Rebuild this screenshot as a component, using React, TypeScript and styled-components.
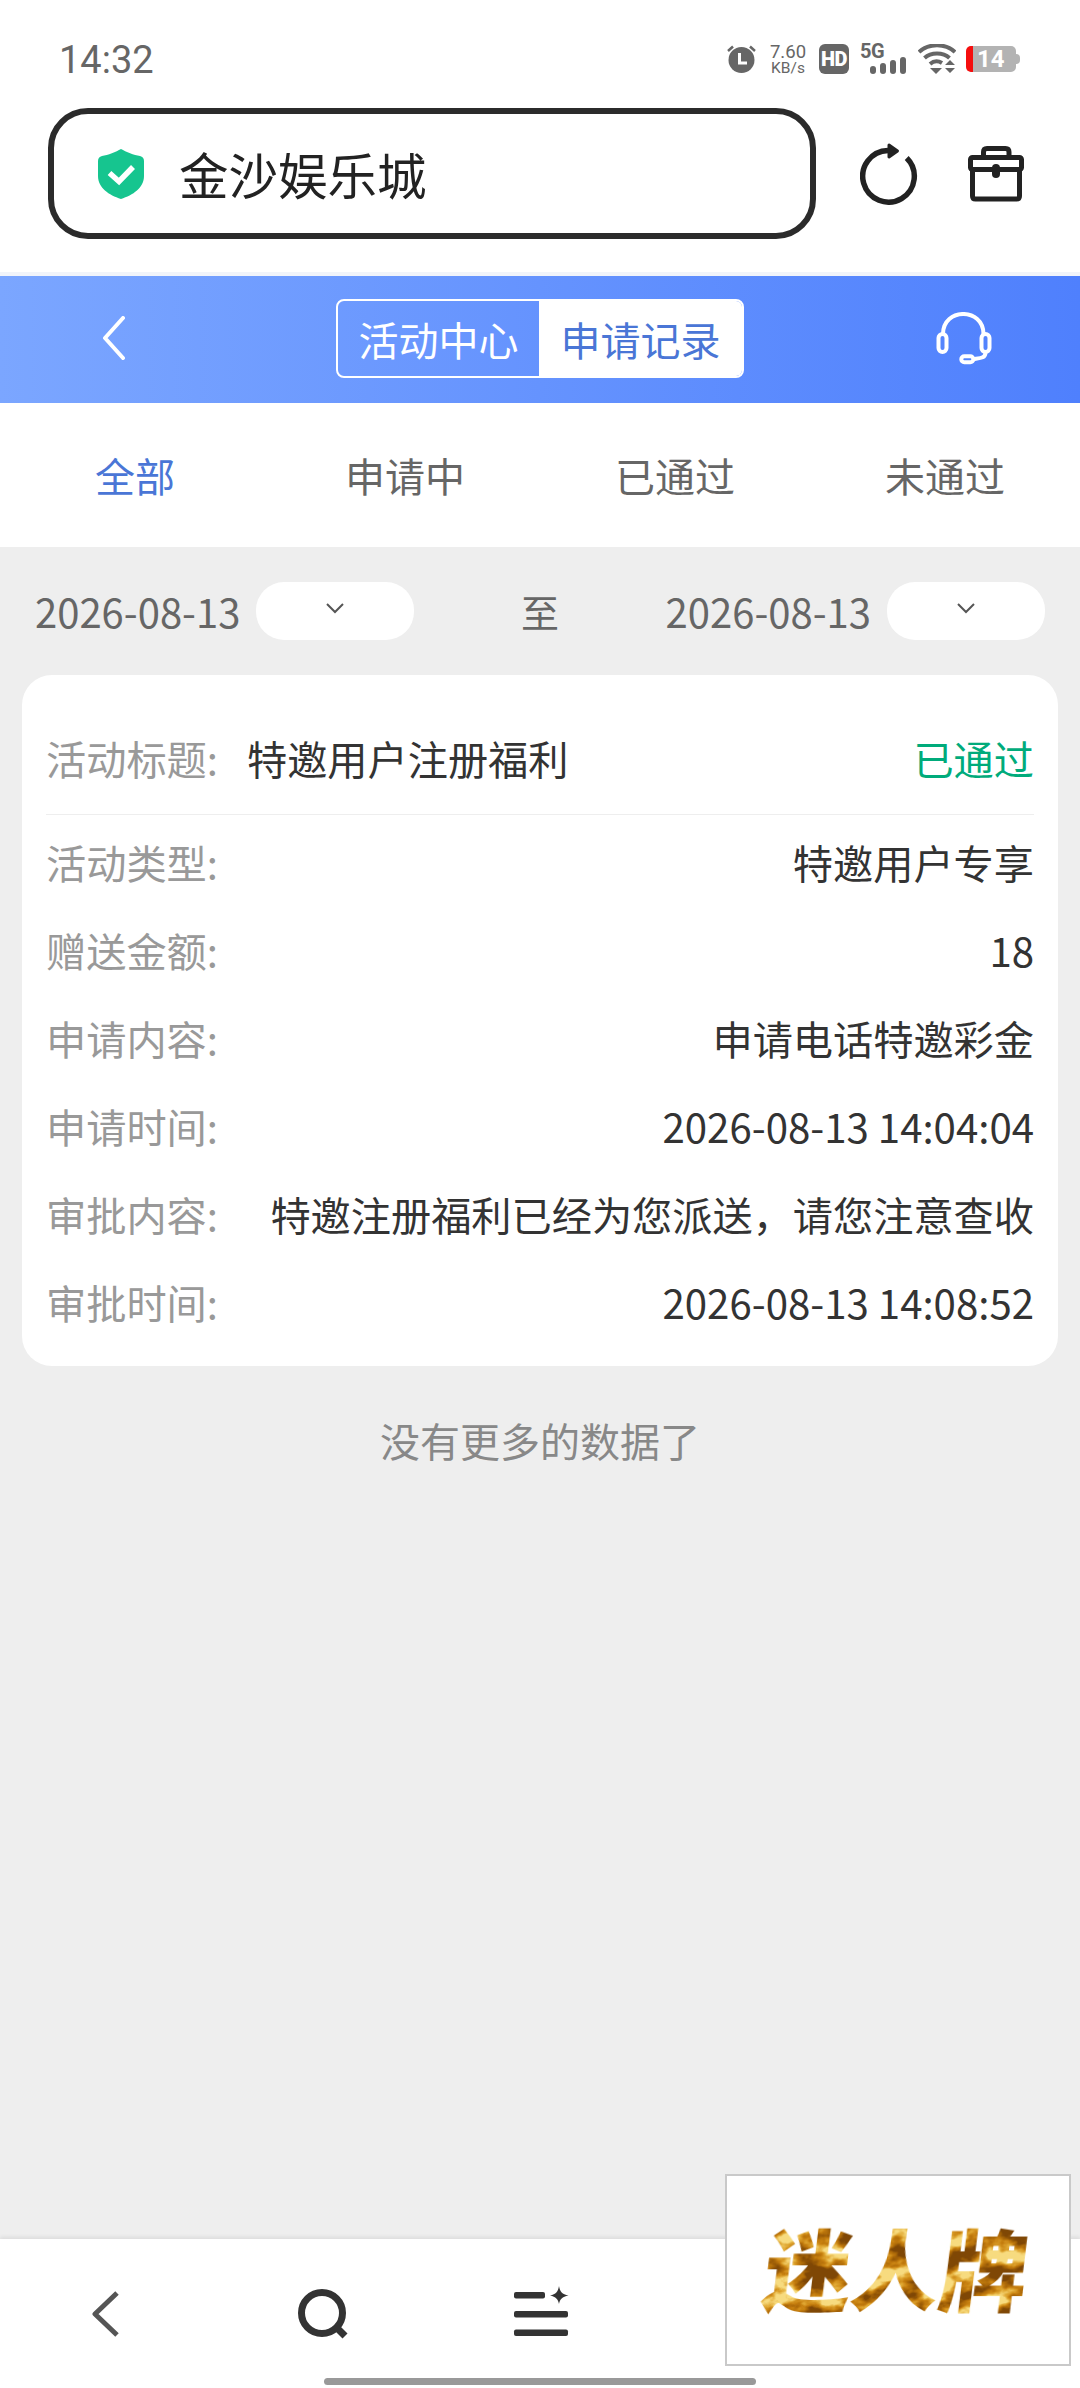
import React from "react";
import styled, { createGlobalStyle } from "styled-components";

const Global = createGlobalStyle`
  html, body { margin: 0; padding: 0; background: #fff; }
  body { font-family: "Noto Sans CJK SC", "Noto Sans", sans-serif; }
  * { box-sizing: border-box; }
`;

const Page = styled.div`
  position: relative;
  width: 1080px;
  height: 2388px;
  display: flex;
  flex-direction: column;
  overflow: hidden;
  background: #eeeeee;
`;

const TopArea = styled.div`
  background: #fff;
  height: 272px;
`;

const StatusBar = styled.div`
  height: 108px;
  padding: 38px 60px 0 59px;
  display: flex;
  justify-content: space-between;
  align-items: flex-start;
`;

const Time = styled.span`
  font-family: Roboto, sans-serif;
  font-size: 38px;
  line-height: 44px;
  color: #666;
`;

const StatusIcons = styled.div`
  display: flex;
  align-items: flex-start;
  margin-top: 6px;
`;

const Speed = styled.div`
  width: 38px;
  margin: 0 12px 0 13px;
  display: flex;
  flex-direction: column;
  align-items: center;
  font-family: Roboto, sans-serif;
  color: #666;
`;

const SpeedValue = styled.span`
  font-size: 18.5px;
  line-height: 17px;
  white-space: nowrap;
`;

const SpeedUnit = styled.span`
  font-size: 15.5px;
  line-height: 15px;
  white-space: nowrap;
`;

const HdBadge = styled.div`
  width: 30px;
  height: 30px;
  margin-right: 11px;
  border-radius: 6px;
  background: #666;
  color: #fff;
  font-family: Roboto, sans-serif;
  font-weight: 900;
  font-size: 20px;
  line-height: 30px;
  letter-spacing: -0.5px;
  text-align: center;
`;

const SignalGroup = styled.div`
  position: relative;
  width: 46px;
  height: 30px;
  margin-right: 12px;
`;

const FiveG = styled.span`
  position: absolute;
  left: 0;
  top: 0;
  font-family: Roboto, sans-serif;
  font-weight: 700;
  font-size: 20px;
  line-height: 15px;
  letter-spacing: -0.5px;
  color: #666;
`;

const Battery = styled.div`
  position: relative;
  width: 50px;
  height: 26px;
  margin: 2px 4px 0 10px;
  border-radius: 5px;
  border-left: 7px solid #f50e0e;
  background: #b3b3b3;
  color: #fff;
  font-family: Roboto, sans-serif;
  font-weight: 700;
  font-size: 24px;
  line-height: 26px;
  padding-left: 4px;

  &::after {
    content: "";
    position: absolute;
    right: -4px;
    top: 8px;
    width: 4px;
    height: 10px;
    border-radius: 0 4px 4px 0;
    background: #b3b3b3;
  }
`;

const AddressRow = styled.div`
  display: flex;
  align-items: center;
  padding-left: 48px;
`;

const AddressBox = styled.div`
  width: 768px;
  height: 131px;
  border: 6px solid #2b2b2b;
  border-radius: 40px;
  display: flex;
  align-items: center;
  padding-left: 44px;
`;

const AddressText = styled.span`
  margin-left: 35px;
  font-size: 49.5px;
  color: #222;
  line-height: 60px;
`;

const AddressActions = styled.div`
  display: flex;
  align-items: center;
  margin-left: 44px;
  gap: 50px;
`;

const Header = styled.div`
  height: 131px;
  border-top: 4px solid #f1f4fa;
  background: linear-gradient(90deg, #7ba6ff 0%, #4f80fd 100%);
  background-clip: padding-box;
  display: flex;
  align-items: center;
  justify-content: space-between;
  padding: 0 87px 0 102px;
`;

const HeaderBackWrap = styled.div`
  display: flex;
  margin-top: -4px;
`;

const Segment = styled.div`
  width: 408px;
  height: 79px;
  margin: -2px 0 0 19px;
  border: 2px solid #fff;
  border-radius: 8px;
  display: flex;
  overflow: hidden;
`;

const SegmentItem = styled.div<{ $active?: boolean }>`
  flex: ${(p) => (p.$active ? "0 0 203px" : "1")};
  display: flex;
  align-items: center;
  justify-content: center;
  font-size: 40px;
  background: ${(p) => (p.$active ? "#fff" : "transparent")};
  color: ${(p) => (p.$active ? "#4a76d6" : "#fff")};
`;

const Tabs = styled.div`
  height: 144px;
  background: #fff;
  display: grid;
  grid-template-columns: repeat(4, 1fr);
`;

const Tab = styled.div<{ $active?: boolean }>`
  display: flex;
  align-items: center;
  justify-content: center;
  font-size: 40px;
  padding-bottom: 1px;
  color: ${(p) => (p.$active ? "#4a76d6" : "#666")};
`;

const Main = styled.div`
  flex: 1;
  padding: 0 22px;
`;

const DateRow = styled.div`
  display: flex;
  align-items: center;
  height: 128px;
  padding: 0 13px;
  justify-content: space-between;
`;

const DateGroup = styled.div`
  display: flex;
  align-items: center;
  gap: 16px;
`;

const DateText = styled.span`
  font-size: 40px;
  color: #666;
  line-height: 58px;
`;

const Pill = styled.div`
  width: 158px;
  height: 58px;
  border-radius: 28px;
  background: #fff;
  display: flex;
  align-items: center;
  justify-content: center;
  padding-bottom: 6px;
`;

const Sep = styled.span`
  font-size: 38px;
  color: #666;
  margin-bottom: 2px;
`;

const Card = styled.div`
  height: 691px;
  background: #fff;
  border-radius: 30px;
  padding: 0 24px;
`;

const TitleRow = styled.div`
  height: 140px;
  border-bottom: 1px solid #eeeeee;
  display: flex;
  align-items: center;
  padding-top: 25px;
`;

const Row = styled.div`
  height: 88px;
  display: flex;
  align-items: center;
  justify-content: space-between;
  font-size: 40.2px;
`;

const Rows = styled.div`
  padding-top: 2px;
`;

const Label = styled.span`
  font-size: 40.2px;
  color: #999;
  white-space: nowrap;
`;

const TitleValue = styled.span`
  flex: 1;
  margin-left: 29px;
  font-size: 40.2px;
  color: #333;
`;

const Status = styled.span`
  font-size: 40.2px;
  color: #00ab7b;
`;

const Value = styled.span`
  color: #333;
  white-space: nowrap;
`;

const Footer = styled.div`
  height: 148px;
  display: flex;
  align-items: center;
  justify-content: center;
  font-size: 40px;
  color: #888;
`;

const BottomNav = styled.div`
  position: relative;
  height: 149px;
  background: #fff;
  box-shadow: 0 -2px 4px rgba(0, 0, 0, 0.08);
  display: flex;
  align-items: center;
  padding: 0 0 0 92px;
`;

const NavSearch = styled.div`
  margin-left: 179px;
  display: flex;
`;

const NavMenu = styled.div`
  margin: -6px 0 0 163px;
  display: flex;
`;

const HomeBar = styled.div`
  position: absolute;
  left: 324px;
  bottom: 3px;
  width: 432px;
  height: 7px;
  border-radius: 4px;
  background: #999;
`;

const LogoBox = styled.div`
  position: absolute;
  left: 725px;
  top: 2174px;
  width: 346px;
  height: 192px;
  background: #fff;
  border: 2px solid #c9c9c9;
  display: flex;
  align-items: center;
  justify-content: center;
`;

const Shield = () => (
  <svg width="46" height="50" viewBox="0 0 46 50">
    <path
      d="M23 0 C28 3 36 6 42 7 Q46 8 46 12 V27 C46 39 35 46 23 50 C11 46 0 39 0 27 V12 Q0 8 4 7 C10 6 18 3 23 0 Z"
      fill="#16c58f"
    />
    <path d="M11.5 24 L21 32.5 L35 18" fill="none" stroke="#fff" strokeWidth="5.5" />
  </svg>
);

const Reload = () => (
  <svg width="58" height="62" viewBox="0 0 58 62" fill="none">
    <path d="M46.7 15 A 25.8 25.8 0 1 1 28 7.5" stroke="#222" strokeWidth="5.5" />
    <path d="M29 2 L37.5 8 L29 14 Z" fill="#222" stroke="#222" strokeWidth="3" strokeLinejoin="round" />
  </svg>
);

const Bag = () => (
  <svg width="56" height="56" viewBox="0 0 56 56" fill="none" stroke="#222" strokeWidth="5" strokeLinejoin="round">
    <path d="M15.5 11 V6 C15.5 3.5 17 2.5 19 2.5 H37.5 C39.5 2.5 41 3.5 41 6 V11" />
    <rect x="2.5" y="11.5" width="51" height="12" rx="2" />
    <path d="M4.5 23 V50 C4.5 52 5.5 53 7.5 53 H48.5 C50.5 53 51.5 52 51.5 50 V23" />
    <rect x="24" y="18" width="8" height="14" rx="4" fill="#222" stroke="none" />
  </svg>
);

const Alarm = () => (
  <svg width="29" height="29" viewBox="0 0 29 29">
    <circle cx="14.5" cy="16" r="13" fill="#666" />
    <path d="M12.5 9 V19 H20" fill="none" stroke="#fff" strokeWidth="3" />
    <path d="M1 7 L6 2.5 M28 7 L23 2.5" stroke="#666" strokeWidth="2.5" />
  </svg>
);

const SignalBars = () => (
  <svg width="46" height="30" viewBox="0 0 46 30">
    <rect x="10" y="22" width="6" height="8" rx="3" fill="#666" />
    <rect x="20" y="19" width="6" height="11" rx="3" fill="#666" />
    <rect x="30" y="16" width="6" height="14" rx="3" fill="#666" />
    <rect x="40" y="13" width="6" height="17" rx="3" fill="#666" />
  </svg>
);

const Wifi = () => (
  <svg width="38" height="30" viewBox="0 0 38 30" fill="none">
    <path d="M1 8 C11 -1 27 -1 37 8" stroke="#666" strokeWidth="4" />
    <path d="M6.5 14 C13 8 25 8 31.5 14" stroke="#666" strokeWidth="4" />
    <path d="M12 20 C16 16.5 20 16.5 24 19" stroke="#666" strokeWidth="4" />
    <path d="M12 24 H24 L18 30 Z" fill="#666" />
    <path d="M32 16 L37 21 H27 Z M27 24 H37 L32 29 Z" fill="#666" />
  </svg>
);

const HeaderBack = () => (
  <svg width="24" height="44" viewBox="0 0 24 44" fill="none" stroke="#fff" strokeWidth="4" strokeLinecap="round" strokeLinejoin="round">
    <path d="M21 2 L3 22 L21 42" />
  </svg>
);

const Headset = () => (
  <svg width="58" height="55" viewBox="0 0 58 55" fill="none" stroke="#fff" strokeWidth="4">
    <path d="M8 22 C8 -4.7 48.5 -4.7 48.5 22" />
    <rect x="3.5" y="22" width="8" height="18" rx="4" />
    <rect x="46.5" y="22" width="8" height="18" rx="4" />
    <path d="M50.5 41 C50 46 46 46 39 47" />
    <rect x="26.3" y="44.3" width="12" height="6" rx="3" />
  </svg>
);

const SmallChevron = () => (
  <svg width="20" height="12" viewBox="0 0 20 12" fill="none" stroke="#555" strokeWidth="2">
    <path d="M2 2 L10 10 L18 2" />
  </svg>
);

const NavBack = () => (
  <svg width="27" height="46" viewBox="0 0 27 46" fill="none" stroke="#555" strokeWidth="5" strokeLinejoin="round">
    <path d="M25 2 L3 23 L25 44" />
  </svg>
);

const NavSearchIcon = () => (
  <svg width="52" height="50" viewBox="0 0 52 50" fill="none" stroke="#333" strokeWidth="7">
    <circle cx="24" cy="24" r="20.5" />
    <path d="M38 38 L47 47" />
  </svg>
);

const NavMenuIcon = () => (
  <svg width="56" height="50" viewBox="0 0 56 50" fill="#333">
    <rect x="1" y="6" width="31" height="6.5" rx="2" />
    <rect x="1" y="25" width="54" height="6.5" rx="2" />
    <rect x="1" y="43.5" width="54" height="6.5" rx="2" />
    <path d="M46 0 C47 6 49 8 55.5 9.5 C49 11 47 13 46 18 C45 13 43 11 37 9.5 C43 8 45 6 46 0 Z" />
  </svg>
);

const GoldLogo = () => (
  <svg width="342" height="188" viewBox="0 0 342 188">
    <defs>
      <filter id="goldMarble" x="-5%" y="-5%" width="110%" height="110%" colorInterpolationFilters="sRGB">
        <feTurbulence type="fractalNoise" baseFrequency="0.03 0.045" numOctaves="4" seed="11" result="noise" />
        <feColorMatrix
          in="noise"
          type="matrix"
          values="3.2 0 0 0 -1.1  3.2 0 0 0 -1.1  3.2 0 0 0 -1.1  0 0 0 0 1"
        />
        <feComponentTransfer result="gold">
          <feFuncR type="table" tableValues="0.5 0.66 0.78 0.88 0.97" />
          <feFuncG type="table" tableValues="0.28 0.4 0.5 0.66 0.86" />
          <feFuncB type="table" tableValues="0.02 0.03 0.06 0.2 0.5" />
        </feComponentTransfer>
        <feComposite in="gold" in2="SourceAlpha" operator="in" />
      </filter>
    </defs>
    <text
      x="33"
      y="128"
      fontFamily='"Noto Sans CJK SC", sans-serif'
      fontWeight="900"
      fontSize="88"
      transform="skewX(-7) translate(16 0)"
      filter="url(#goldMarble)"
    >
      迷人牌
    </text>
  </svg>
);

const details: [string, string][] = [
  ["活动类型:", "特邀用户专享"],
  ["赠送金额:", "18"],
  ["申请内容:", "申请电话特邀彩金"],
  ["申请时间:", "2026-08-13 14:04:04"],
  ["审批内容:", "特邀注册福利已经为您派送\uFF0C请您注意查收"],
  ["审批时间:", "2026-08-13 14:08:52"],
];

export default function App() {
  return (
    <Page>
      <Global />
      <TopArea>
        <StatusBar>
          <Time>14:32</Time>
          <StatusIcons>
            <Alarm />
            <Speed>
              <SpeedValue>7.60</SpeedValue>
              <SpeedUnit>KB/s</SpeedUnit>
            </Speed>
            <HdBadge>HD</HdBadge>
            <SignalGroup>
              <FiveG>5G</FiveG>
              <SignalBars />
            </SignalGroup>
            <Wifi />
            <Battery>14</Battery>
          </StatusIcons>
        </StatusBar>
        <AddressRow>
          <AddressBox>
            <Shield />
            <AddressText>金沙娱乐城</AddressText>
          </AddressBox>
          <AddressActions>
            <Reload />
            <Bag />
          </AddressActions>
        </AddressRow>
      </TopArea>
      <Header>
        <HeaderBackWrap>
          <HeaderBack />
        </HeaderBackWrap>
        <Segment>
          <SegmentItem>活动中心</SegmentItem>
          <SegmentItem $active>申请记录</SegmentItem>
        </Segment>
        <Headset />
      </Header>
      <Tabs>
        <Tab $active>全部</Tab>
        <Tab>申请中</Tab>
        <Tab>已通过</Tab>
        <Tab>未通过</Tab>
      </Tabs>
      <Main>
        <DateRow>
          <DateGroup>
            <DateText>2026-08-13</DateText>
            <Pill><SmallChevron /></Pill>
          </DateGroup>
          <Sep>至</Sep>
          <DateGroup>
            <DateText>2026-08-13</DateText>
            <Pill><SmallChevron /></Pill>
          </DateGroup>
        </DateRow>
        <Card>
          <TitleRow>
            <Label>活动标题:</Label>
            <TitleValue>特邀用户注册福利</TitleValue>
            <Status>已通过</Status>
          </TitleRow>
          <Rows>
            {details.map(([k, v]) => (
              <Row key={k}>
                <Label>{k}</Label>
                <Value>{v}</Value>
              </Row>
            ))}
          </Rows>
        </Card>
        <Footer>没有更多的数据了</Footer>
      </Main>
      <BottomNav>
        <NavBack />
        <NavSearch><NavSearchIcon /></NavSearch>
        <NavMenu><NavMenuIcon /></NavMenu>
        <HomeBar />
      </BottomNav>
      <LogoBox>
        <GoldLogo />
      </LogoBox>
    </Page>
  );
}
